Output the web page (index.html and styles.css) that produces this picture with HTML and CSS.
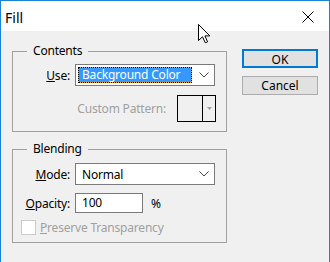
FILE: index.html
```html
<!DOCTYPE html>
<html lang="en">
  <head>
    <meta charset="UTF-8" />
    <title>Fill</title>
    <link rel="stylesheet" href="styles.css">
  </head>
  <body>
    <div class="window">
      <div class="titlebar">
        <span class="title">Fill</span>
        <svg class="close" width="12" height="12" viewBox="0 0 12 12">
          <path d="M0.5 0.5 L11.5 11.5 M11.5 0.5 L0.5 11.5" stroke="#000" stroke-width="1" fill="none" />
        </svg>
      </div>
      <div class="content">
        <div class="groups">
          <fieldset class="group">
            <legend>Contents</legend>
            <div class="row">
              <label class="label"><u>U</u>se:</label>
              <div class="select">
                <span class="selected">Background Color</span>
                <svg class="chevron" width="10" height="6" viewBox="0 0 10 6">
                  <polyline points="0.5,0.5 5,5 9.5,0.5" stroke="#444" fill="none" />
                </svg>
              </div>
            </div>
            <div class="row pattern-row">
              <span class="disabled">Custom Pattern:</span>
              <div class="pattern">
                <div class="swatch"></div>
                <div class="pattern-arrow">
                  <svg width="5" height="3" viewBox="0 0 5 3">
                    <polygon points="0,0 5,0 2.5,3" fill="#a0a0a0" />
                  </svg>
                </div>
              </div>
            </div>
          </fieldset>

          <fieldset class="group blending">
            <legend>Blending</legend>
            <div class="row">
              <label class="label"><u>M</u>ode:</label>
              <div class="select">
                <span class="value">Normal</span>
                <svg class="chevron" width="10" height="6" viewBox="0 0 10 6">
                  <polyline points="0.5,0.5 5,5 9.5,0.5" stroke="#444" fill="none" />
                </svg>
              </div>
            </div>
            <div class="row opacity-row">
              <label class="label"><u>O</u>pacity:</label>
              <div class="input">100</div>
              <span class="unit">%</span>
            </div>
            <div class="check-row">
              <span class="checkbox"></span>
              <span class="disabled"><u>P</u>reserve Transparency</span>
            </div>
          </fieldset>
        </div>

        <div class="buttons">
          <button class="btn default">OK</button>
          <button class="btn">Cancel</button>
        </div>
      </div>

      <svg class="cursor" width="13" height="20" viewBox="0 0 13 20">
        <path d="M0.5 0.5 L0.5 16.5 L4.5 12.8 L7.3 18.8 L9.6 17.8 L6.9 11.9 L11.8 11.9 Z" fill="#fff" stroke="#000" stroke-width="1" stroke-linejoin="miter" />
      </svg>
    </div>
  </body>
</html>
```

FILE: styles.css
```css
* {
  box-sizing: border-box;
}
body {
  margin: 0;
  font-family: "Noto Sans", sans-serif;
  font-size: 12px;
  letter-spacing: -0.2px;
  color: #000;
}
.window {
  position: relative;
  width: 330px;
  height: 262px;
  background: #f0f0f0;
  border: 1px solid #1883d7;
  border-bottom: none;
  overflow: hidden;
}
.titlebar {
  height: 30px;
  background: #fff;
  display: flex;
  align-items: center;
  justify-content: space-between;
  padding: 0 15px 0 4px;
}
.title {
  font-size: 14px;
  letter-spacing: 0;
  margin-top: 2px;
}
.close {
  display: block;
  margin-top: 2px;
}
.content {
  display: flex;
  padding: 12px 0 0 11px;
}
.groups {
  width: 215px;
}
.group {
  margin: 0;
  border: 1px solid #a0a0a0;
  padding: 5px 10px 9px 0;
  min-width: 0;
}
.group legend {
  margin-left: 14px;
  padding: 0 6px;
  line-height: 16px;
}
.blending {
  margin-top: 9px;
  padding: 6px 10px 7px 0;
}
.row {
  display: flex;
  align-items: center;
}
.label {
  width: 57px;
  text-align: right;
  margin-right: 5px;
}
.select {
  width: 140px;
  height: 22px;
  background: #fff;
  border: 1px solid #7a7a7a;
  display: flex;
  align-items: center;
  justify-content: space-between;
  padding: 0 5px 0 2px;
}
.selected {
  width: 114px;
  height: 16px;
  line-height: 14px;
  padding-left: 3px;
  color: #fff;
  border: 1px dotted #000;
  background: linear-gradient(#3399ff, #3399ff) padding-box, #f0a040 border-box;
}
.value {
  padding-left: 4px;
}
.chevron {
  display: block;
}
.pattern-row {
  justify-content: flex-end;
  margin-top: 9px;
  gap: 11px;
}
.disabled {
  color: #a0a0a0;
}
.pattern {
  width: 39px;
  height: 27px;
  border: 1px solid #000;
  display: flex;
}
.swatch {
  width: 25px;
  border-right: 1px solid #000;
}
.pattern-arrow {
  flex: 1;
  display: flex;
  justify-content: center;
  padding-top: 11px;
}
.pattern-arrow svg {
  display: block;
}
.opacity-row {
  margin-top: 8px;
}
.input {
  width: 68px;
  height: 20px;
  background: #fff;
  border: 1px solid #7a7a7a;
  padding-left: 6px;
  line-height: 18px;
}
.unit {
  margin-left: 8px;
}
.check-row {
  display: flex;
  align-items: center;
  margin-top: 7px;
  padding-left: 8px;
  height: 15px;
}
.checkbox {
  width: 15px;
  height: 15px;
  background: #fff;
  border: 1px solid #cccccc;
  margin-right: 4px;
}
.buttons {
  display: flex;
  flex-direction: column;
  gap: 8px;
  margin: 6px 0 0 15px;
}
.btn {
  width: 76px;
  height: 19px;
  font-family: inherit;
  font-size: 12px;
  letter-spacing: 0;
  padding: 0;
  background: #e1e1e1;
  border: 1px solid #adadad;
  color: #000;
}
.btn.default {
  border: 2px solid #0078d7;
}
.cursor {
  position: absolute;
  left: 197px;
  top: 23px;
}
```
